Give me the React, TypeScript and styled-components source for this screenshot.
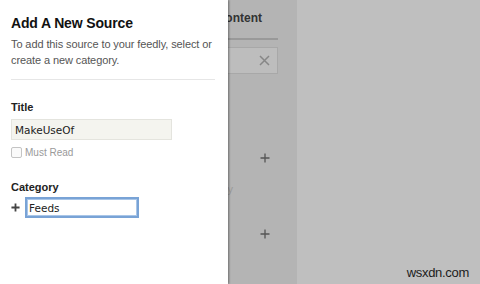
import React from "react";
import styled, { createGlobalStyle } from "styled-components";

const GlobalStyle = createGlobalStyle`
  html, body {
    margin: 0;
    padding: 0;
    background: #ffffff;
  }
  body {
    font-family: "Liberation Sans", Arial, sans-serif;
  }
  * {
    box-sizing: border-box;
  }
`;

const Page = styled.div`
  position: relative;
  width: 480px;
  height: 284px;
  display: flex;
  overflow: hidden;
`;

/* the feedly page underneath the drawer */
const Sidebar = styled.div`
  width: 297px;
  flex: none;
  background: #f1f1f1;
  padding: 11px 19px 0 12px;
  display: flex;
  flex-direction: column;
`;

const Main = styled.div`
  flex: 1;
  background: #ffffff;
`;

const SidebarTitle = styled.div`
  font-size: 12px;
  line-height: 14px;
  font-weight: 700;
  color: #444444;
  text-align: right;
  padding: 0 16px 13px 0;
  border-bottom: 2px solid #cccccc;
`;

const SearchBox = styled.div`
  margin-top: 7px;
  height: 27px;
  border: 1px solid #e0e0e0;
  background: #fcfcfc;
  display: flex;
  align-items: center;
  justify-content: flex-end;
  padding-right: 7px;
`;

const SourceList = styled.div`
  margin-top: 72px;
  display: flex;
  flex-direction: column;
  gap: 26px;
`;

const SourceHead = styled.div`
  height: 24px;
  display: flex;
  align-items: center;
  justify-content: flex-end;
  padding-right: 8px;
`;

const SourceDesc = styled.div`
  margin-top: 12px;
  font-size: 11px;
  line-height: 14px;
  color: #cdcdcd;
  text-align: right;
  padding-right: 45px;
`;

const Dim = styled.div`
  position: absolute;
  inset: 0;
  background: rgba(0, 0, 0, 0.25);
`;

/* drawer */
const Drawer = styled.div`
  position: absolute;
  top: 0;
  left: 0;
  bottom: 0;
  width: 228px;
  background: #ffffff;
  box-shadow: 1px 0 2px rgba(0, 0, 0, 0.4);
  padding: 15px 13px 0 11px;
  display: flex;
  flex-direction: column;
`;

const Heading = styled.h1`
  margin: 0;
  font-size: 14px;
  line-height: 16px;
  font-weight: 700;
  letter-spacing: -0.15px;
  color: #111111;
`;

const Intro = styled.p`
  margin: 5px 0 0;
  font-size: 11px;
  line-height: 16px;
  letter-spacing: -0.1px;
  color: #555555;
`;

const Divider = styled.hr`
  margin: 11px 0 0;
  border: 0;
  border-top: 1px solid #e6e6e6;
  height: 0;
`;

type LabelProps = {
  $gap: number;
};

const Label = styled.div<LabelProps>`
  margin-top: ${props => props.$gap}px;
  font-size: 11px;
  line-height: 14px;
  font-weight: 700;
  color: #222222;
`;

type FieldProps = {
  $focused?: boolean;
  $width: number;
};

const Field = styled.input<FieldProps>`
  display: block;
  width: ${props => props.$width}px;
  height: 21px;
  margin: 0;
  padding: 0 0 0 ${props => (props.$focused ? 2 : 3)}px;
  font-family: "DejaVu Sans", "Liberation Sans", sans-serif;
  font-size: 10.5px;
  color: #222222;
  outline: none;
  border-radius: 0;
  border: ${props => (props.$focused ? "2px solid #79a3d6" : "1px solid #e4e4de")};
  background: ${props => (props.$focused ? "#ffffff" : "#f4f4ef")};
  box-shadow: ${props => (props.$focused ? "inset 0 0 0 1px #a9c6e8" : "none")};
`;

const TitleField = styled(Field)`
  margin-top: 5px;
`;

const CheckRow = styled.label`
  margin-top: 7px;
  display: flex;
  align-items: center;
  gap: 3px;
  height: 11px;
  font-size: 10px;
  line-height: 11px;
  color: #9a9a9a;
`;

const CheckBox = styled.span`
  width: 11px;
  height: 11px;
  border: 1px solid #c4c4c4;
  border-radius: 2px;
  background: #fafafa;
`;

const CategoryRow = styled.div`
  margin-top: 3px;
  display: flex;
  align-items: center;
  gap: 5px;
`;

const Watermark = styled.div`
  position: absolute;
  right: 11px;
  bottom: 3px;
  font-size: 13px;
  line-height: 16px;
  letter-spacing: -0.3px;
  color: #1c1c1c;
`;

const PlusIcon: React.FC<{ size: number; stroke: number; color: string }> = ({ size, stroke, color }) => (
  <svg width={size} height={size} viewBox="0 0 10 10">
    <path d="M5 0.5V9.5M0.5 5H9.5" stroke={color} strokeWidth={stroke} fill="none" />
  </svg>
);

const CloseIcon = () => (
  <svg width="11" height="11" viewBox="0 0 11 11">
    <path d="M1 1L10 10M10 1L1 10" stroke="#b5b5b5" strokeWidth="1.5" fill="none" />
  </svg>
);

const sources = [
  { id: "tech", desc: "Photography" },
  { id: "news", desc: "" },
];

const App: React.FC = () => {
  return (
    <Page>
      <GlobalStyle />
      <Sidebar>
        <SidebarTitle>Add Content</SidebarTitle>
        <SearchBox>
          <CloseIcon />
        </SearchBox>
        <SourceList>
          {sources.map(s => (
            <div key={s.id}>
              <SourceHead>
                <PlusIcon size={10} stroke={1.3} color="#717171" />
              </SourceHead>
              {s.desc && <SourceDesc>{s.desc}</SourceDesc>}
            </div>
          ))}
        </SourceList>
      </Sidebar>
      <Main />
      <Dim />
      <Drawer>
        <Heading>Add A New Source</Heading>
        <Intro>To add this source to your feedly, select or create a new category.</Intro>
        <Divider />
        <Label $gap={20}>Title</Label>
        <TitleField $width={161} defaultValue="MakeUseOf" />
        <CheckRow>
          <CheckBox />
          Must Read
        </CheckRow>
        <Label $gap={22}>Category</Label>
        <CategoryRow>
          <PlusIcon size={9} stroke={2} color="#444444" />
          <Field $focused $width={114} defaultValue="Feeds" />
        </CategoryRow>
      </Drawer>
      <Watermark>wsxdn.com</Watermark>
    </Page>
  );
};

export default App;
